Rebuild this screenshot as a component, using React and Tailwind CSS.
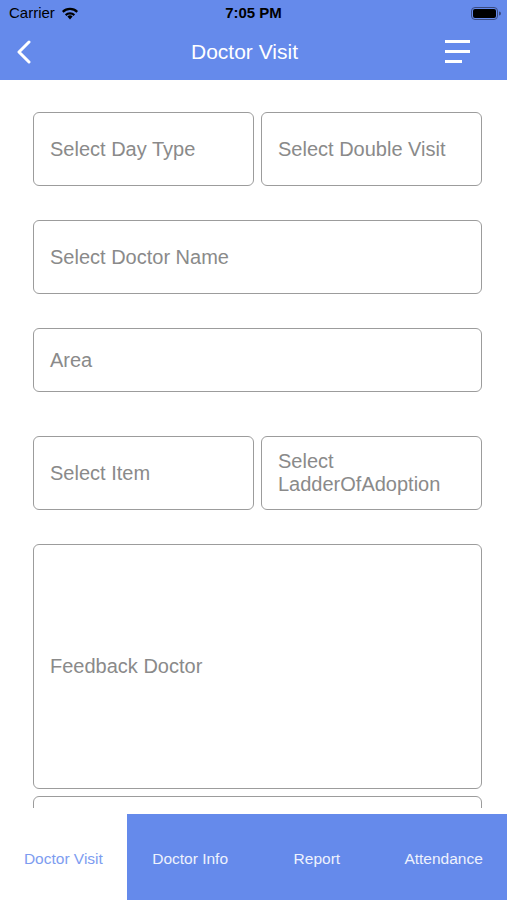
import React from 'react';

const Field = ({ className = '', children }) => (
    <div className={`flex items-center rounded-[6px] border-[1.5px] border-[#9c9c9c] px-[16px] text-[20px] leading-[23px] text-[#8a8a8a] ${className}`}>
        <span>{children}</span>
    </div>
);

const App = () => {
    return (
        <div className="flex h-[900px] w-[507px] flex-col overflow-hidden bg-white font-['Liberation_Sans',Arial,sans-serif]">
            {/* Header */}
            <div className="h-[80px] bg-[#658aeb]">
                <div className="relative flex h-[27px] items-center px-[9px] text-[15px] text-black">
                    <span>Carrier</span>
                    <svg className="ml-[6px]" width="18" height="13" viewBox="0 0 18 13">
                        <path d="M9 12.5l2.6-2.9a3.6 3.6 0 0 0-5.2 0z" fill="#000" />
                        <path d="M3.9 7.3a7.3 7.3 0 0 1 10.2 0l-1.5 1.6a5.1 5.1 0 0 0-7.2 0z" fill="#000" />
                        <path d="M1 4.1a11.4 11.4 0 0 1 16 0l-1.5 1.6a9.2 9.2 0 0 0-13 0z" fill="#000" />
                    </svg>
                    <span className="absolute left-1/2 -translate-x-1/2 font-bold">7:05 PM</span>
                    <svg className="absolute right-[6px] top-[7px]" width="30" height="13" viewBox="0 0 30 13">
                        <rect x="0.5" y="0.5" width="26" height="12" rx="3.5" fill="none" stroke="#3a4a80" strokeWidth="1" />
                        <rect x="2" y="2" width="23" height="9" rx="2" fill="#000" />
                        <path d="M28 4.5v4a2 2 0 0 0 0-4z" fill="#3a4a80" />
                    </svg>
                </div>
                <div className="relative flex h-[53px] items-center justify-center">
                    <svg className="absolute left-[15px] top-[13px]" width="18" height="24" viewBox="0 0 18 24">
                        <path d="M14 2L4 12l10 10" fill="none" stroke="#fff" strokeWidth="3" strokeLinecap="round" strokeLinejoin="round" />
                    </svg>
                    <span className="-translate-x-[9px] -translate-y-[2px] text-[21px] text-white">Doctor Visit</span>
                    <div className="absolute right-[37px] top-[13px] flex flex-col gap-[7px]">
                        <div className="h-[3px] w-[25px] bg-white"></div>
                        <div className="h-[3px] w-[25px] bg-white"></div>
                        <div className="h-[3px] w-[17px] bg-white"></div>
                    </div>
                </div>
            </div>

            {/* Form */}
            <div className="h-[728px] overflow-hidden pl-[33px] pr-[25px] pt-[32px]">
                <div className="flex flex-col">
                    <div className="grid grid-cols-2 gap-[7px]">
                        <Field className="h-[74px]">Select Day Type</Field>
                        <Field className="h-[74px]">Select Double Visit</Field>
                    </div>
                    <Field className="mt-[34px] h-[74px]">Select Doctor Name</Field>
                    <Field className="mt-[34px] h-[64px]">Area</Field>
                    <div className="mt-[44px] grid grid-cols-2 gap-[7px]">
                        <Field className="h-[74px]">Select Item</Field>
                        <Field className="h-[74px]">Select<br />LadderOfAdoption</Field>
                    </div>
                    <Field className="mt-[34px] h-[245px]">Feedback Doctor</Field>
                    <Field className="mt-[7px] h-[74px]"></Field>
                </div>
            </div>

            {/* Tab bar */}
            <div className="mt-[6px] grid h-[86px] grid-cols-4 text-[15.5px]">
                <div className="flex items-center justify-center bg-white pt-[4px] text-[#7d9cf0]">Doctor Visit</div>
                <div className="flex items-center justify-center bg-[#658aeb] pt-[4px] text-[#eef2fd]">Doctor Info</div>
                <div className="flex items-center justify-center bg-[#658aeb] pt-[4px] text-[#eef2fd]">Report</div>
                <div className="flex items-center justify-center bg-[#658aeb] pt-[4px] text-[#eef2fd]">Attendance</div>
            </div>
        </div>
    );
};

export default App;
